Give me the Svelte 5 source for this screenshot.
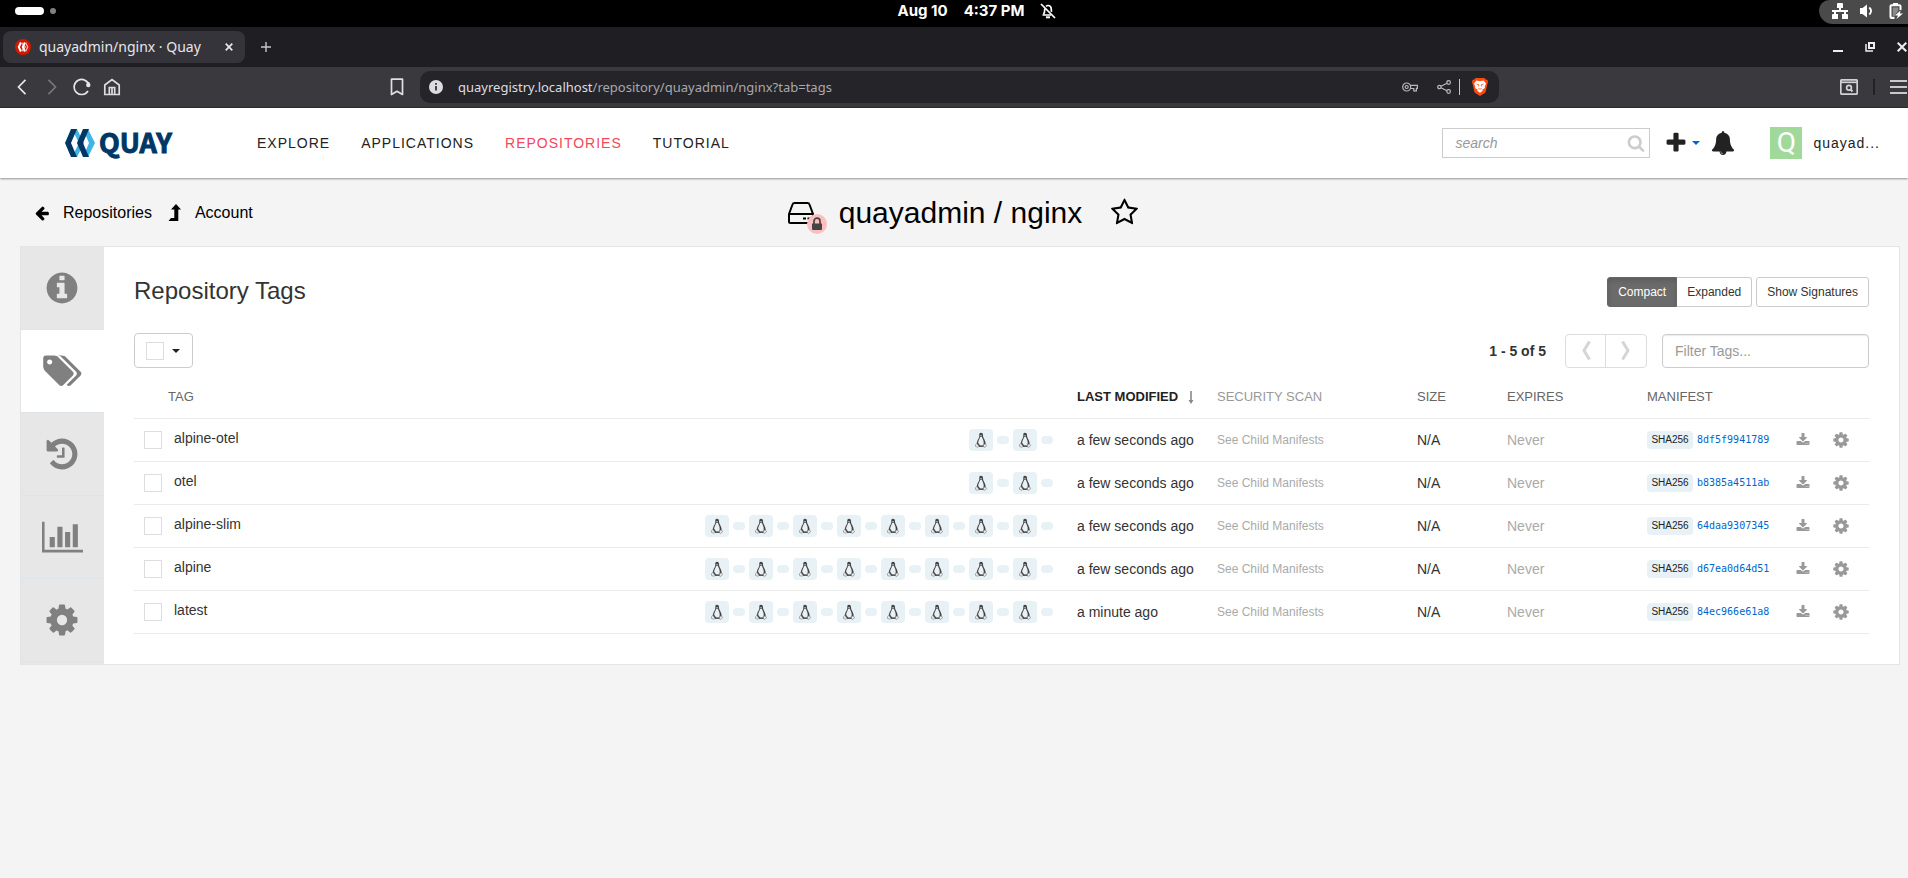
<script>
  const navLinks = ['EXPLORE', 'APPLICATIONS', 'REPOSITORIES', 'TUTORIAL'];
  const activeNav = 'REPOSITORIES';

  const tags = [
    { name: 'alpine-otel', archs: 2, modified: 'a few seconds ago', hash: '8df5f9941789' },
    { name: 'otel', archs: 2, modified: 'a few seconds ago', hash: 'b8385a4511ab' },
    { name: 'alpine-slim', archs: 8, modified: 'a few seconds ago', hash: '64daa9307345' },
    { name: 'alpine', archs: 8, modified: 'a few seconds ago', hash: 'd67ea0d64d51' },
    { name: 'latest', archs: 8, modified: 'a minute ago', hash: '84ec966e61a8' }
  ];

  const cog = 'M1152 896q0-106-75-181t-181-75-181 75-75 181 75 181 181 75 181-75 75-181zm512-109v222q0 12-8 23t-20 13l-185 28q-19 54-39 91 35 50 107 138 10 12 10 25t-9 23q-27 37-99 108t-94 71q-12 0-26-9l-138-108q-44 23-91 38-16 136-29 186-7 28-36 28h-222q-14 0-24.5-8.5t-11.5-21.5l-28-184q-49-16-90-37l-141 107q-10 9-25 9-14 0-25-11-126-114-165-168-7-10-7-23 0-12 8-23 15-21 51-66.5t54-70.5q-27-50-41-99l-183-27q-13-2-21-12.5t-8-23.5v-222q0-12 8-23t19-13l186-28q14-46 39-92-40-57-107-138-10-12-10-24 0-10 9-23 26-36 98.5-107.5t94.5-71.5q13 0 26 10l138 107q44-23 91-38 16-136 29-186 7-28 36-28h222q14 0 24.5 8.5t11.5 21.5l28 184q49 16 90 37l142-107q9-9 24-9 13 0 25 10 129 119 165 170 7 8 7 22 0 12-8 23-15 21-51 66.5t-54 70.5q26 50 41 98l183 28q13 2 21 12.5t8 23.5z';
  const info = 'M1152 1376v-160q0-14-9-23t-23-9h-96v-512q0-14-9-23t-23-9h-320q-14 0-23 9t-9 23v160q0 14 9 23t23 9h96v320h-96q-14 0-23 9t-9 23v160q0 14 9 23t23 9h448q14 0 23-9t9-23zm-128-896v-160q0-14-9-23t-23-9h-192q-14 0-23 9t-9 23v160q0 14 9 23t23 9h192q14 0 23-9t9-23zm640 416q0 209-103 385.5t-279.5 279.5-385.5 103-385.5-103-279.5-279.5-103-385.5 103-385.5 279.5-279.5 385.5-103 385.5 103 279.5 279.5 103 385.5z';
  const history = 'M1664 896q0 156-61 298t-164 245-245 164-298 61q-172 0-327-72.5t-264-204.5q-7-10-6.5-22.5t8.5-20.5l137-138q10-9 25-9 16 2 23 12 73 95 179 147t225 52q104 0 198.5-40.5t163.5-109.5 109.5-163.5 40.5-198.5-40.5-198.5-109.5-163.5-163.5-109.5-198.5-40.5q-98 0-188 35.5t-160 101.5l137 138q31 30 14 69-17 40-59 40h-448q-26 0-45-19t-19-45v-448q0-42 40-59 39-17 69 14l130 129q107-101 244.5-156.5t284.5-55.5q156 0 298 61t245 164 164 245 61 298zm-640-288v448q0 14-9 23t-23 9h-320q-14 0-23-9t-9-23v-64q0-14 9-23t23-9h224v-352q0-14 9-23t23-9h64q14 0 23 9t9 23z';
  const tagsIcon = 'M448 448q0-53-37.5-90.5t-90.5-37.5-90.5 37.5-37.5 90.5 37.5 90.5 90.5 37.5 90.5-37.5 37.5-90.5zm1067 576q0 53-37 90l-491 492q-39 37-91 37-53 0-90-37l-715-716q-38-37-64.5-101t-26.5-117v-416q0-52 38-90t90-38h416q53 0 117 26.5t102 64.5l715 714q37 39 37 91zm384 0q0 53-37 90l-491 492q-39 37-91 37-36 0-59-14t-53-45l470-470q37-37 37-90 0-52-37-91l-715-714q-38-38-102-64.5t-117-26.5h224q53 0 117 26.5t102 64.5l715 714q37 39 37 91z';
  const chart = 'M640 896v512h-256v-512h256zm384-512v1024h-256v-1024h256zm1024 1152v128h-2048v-1536h128v1408h1920zm-640-896v768h-256v-768h256zm384-384v1152h-256v-1152h256z';

  const sideTabs = [
    { label: 'Information', path: info, width: 36, box: '0 0 1792 1792' },
    { label: 'Tags', path: tagsIcon, width: 39, box: '0 0 1920 1792', active: true },
    { label: 'Tag History', path: history, width: 36, box: '0 0 1792 1792' },
    { label: 'Usage Logs', path: chart, width: 41, box: '0 0 2048 1792' },
    { label: 'Settings', path: cog, width: 36, box: '0 0 1792 1792' }
  ];
</script>

<div class="sysbar">
  <div class="workspaces"><span class="current"></span><span class="dot"></span></div>
  <div class="clock">
    <span>Aug 10</span><span>4:37 PM</span>
    <svg width="16" height="16" viewBox="0 0 16 16" fill="none" stroke="#fff" stroke-width="1.7">
      <path d="M3.5 11.2c1-1 1.2-2.300 1.2-4.200 0-.6.1-1 .3-1.500M6 3.300C6.600 2.800 7.300 2.500 8 2.500c2 0 3.300 1.600 3.300 4.200 0 .8.100 1.500.2 2.100M2.500 12h8.500" />
      <path d="M1 1l14 14" /><path d="M6 14.300h4" stroke-width="2" />
    </svg>
  </div>
  <div class="tray">
    <svg width="16" height="16" viewBox="0 0 16 16" fill="#fff"><path d="M6 0h4a1 1 0 0 1 1 1v4H9v2h7v2h-2v2h1a1 1 0 0 1 1 1v4h-6v-5h2V9H4v2h2v5H0v-4a1 1 0 0 1 1-1h1V9H0V7h7V5H5V1a1 1 0 0 1 1-1z" /></svg>
    <svg width="16" height="16" viewBox="0 0 16 16" fill="#fff"><path d="M0 5h2.500L7 1.500v13L2.500 11H0z" /><path d="M9.300 4.500q3.600 3.500 0 7" fill="none" stroke="#fff" stroke-width="1.800" /></svg>
    <svg width="16" height="16" viewBox="0 0 16 16"><path d="M5 0h5v1.200h1.500A2 2 0 0 1 13.500 3v4h-2V3.200h-8v10.600h3V16h-3a2 2 0 0 1-2-2V3.200a2 2 0 0 1 2-2H5z" fill="#fff" /><path d="M4.700 4.500h5.600V8l-4 5H4.700z" fill="#8a8a8a" /><path d="M12.500 7.500L7 12.500h3L8.500 16l6.500-5.500h-3z" fill="#fff" /></svg>
  </div>
</div>

<div class="tabstrip">
  <div class="btab">
    <svg width="16" height="16" viewBox="0 0 16 16"><circle cx="8" cy="8" r="8" fill="#d31800" /><path d="M6.700 3.800L10.300 8l-3.600 4.200M10.700 3.800L12.700 8l-2 4.200" fill="none" stroke="#f3b5ad" stroke-width="1.300" /><path d="M5.900 3.500L3.800 8l2.100 4.500M9.900 3.500L7.800 8l2.100 4.500" fill="none" stroke="#fff" stroke-width="2" /></svg>
    <span class="btitle">quayadmin/nginx · Quay</span>
    <button class="plain" aria-label="Close tab"><svg width="8" height="8" viewBox="0 0 8 8"><path d="M.7.7l6.600 6.600M7.300.7L.7 7.300" stroke="#e8e8ea" stroke-width="1.700" /></svg></button>
  </div>
  <button class="plain newtab" aria-label="New tab"><svg width="12" height="12" viewBox="0 0 12 12"><path d="M6 1v10M1 6h10" stroke="#c8c8cc" stroke-width="1.400" /></svg></button>
  <div class="wincontrols">
    <svg width="10" height="10" viewBox="0 0 10 10"><path d="M0 9h10" stroke="#eee" stroke-width="2" /></svg>
    <svg width="10" height="10" viewBox="0 0 10 10"><path d="M4 1h5v5H4z" fill="none" stroke="#eee" stroke-width="2" /><path d="M1 2v7h7" fill="none" stroke="#eee" stroke-width="1.500" /></svg>
    <svg width="10" height="10" viewBox="0 0 10 10"><path d="M.7.700l8.600 8.600M9.300.700L.7 9.300" stroke="#eee" stroke-width="2" /></svg>
  </div>
</div>

<div class="toolbar">
  <div class="navbtns">
    <svg width="18" height="18" viewBox="0 0 18 18"><path d="M12.500 1.800L5.500 9l7 7.200" stroke="#e6e6e9" /></svg>
    <svg width="18" height="18" viewBox="0 0 18 18"><path d="M5.500 1.800L12.500 9l-7 7.200" stroke="#77767c" /></svg>
    <svg width="18" height="18" viewBox="0 0 18 18"><path d="M16 7.500A7.500 7.500 0 1 0 15 13" stroke="#e6e6e9" /><circle cx="15.300" cy="7" r="2.200" fill="#e6e6e9" /><path d="M15.500 4v4" stroke="#e6e6e9" /></svg>
    <svg width="18" height="18" viewBox="0 0 18 18"><path d="M1.800 7L9 1.500 16.200 7v9.500H1.800zM6.300 16V9.500h5.400V16M9 9.500V16" stroke="#dcdce0" /></svg>
  </div>
  <svg class="bookmark" width="14" height="18" viewBox="0 0 14 18"><path d="M1.500 1.200h11v15.300L7 13.300l-5.500 3.200z" stroke="#e0e0e4" stroke-linejoin="round" /></svg>
  <div class="address">
    <svg width="14" height="14" viewBox="0 0 14 14"><circle cx="7" cy="7" r="7" fill="#dcdce2" /><path d="M7 6v4.500M7 3v1.700" stroke="#35343a" stroke-width="1.800" /></svg>
    <span class="url">quayregistry.localhost<span>/repository/quayadmin/nginx?tab=tags</span></span>
    <svg width="16" height="16" viewBox="0 0 16 16" stroke="#b9b8bf" fill="none" stroke-width="1.200"><circle cx="4.700" cy="8" r="4" /><circle cx="4.700" cy="8" r="1.500" /><path d="M8.500 6.300h6.900v3h-1v2.500h-2.600V9.500H8.500" /></svg>
    <svg class="share" width="14" height="14" viewBox="0 0 14 14" stroke="#b9b8bf" fill="none" stroke-width="1.200"><circle cx="2.400" cy="7" r="1.700" /><circle cx="11.600" cy="2.500" r="1.800" /><circle cx="11.600" cy="11.500" r="1.800" /><path d="M4 6.300l6-3M4 7.700l6 3" /></svg>
    <i class="bar"></i>
    <svg width="16" height="18" viewBox="0 0 16 18"><path d="M3.500 0h9L14 1.800l1.500-.1.500 2.800-.6 1.500-1.600 7.200q-.4 1.300-1.500 2L8 18l-4.300-2.800q-1.100-.7-1.500-2L.6 6 0 4.500l.5-2.800L2 1.800z" fill="#fb4a10" /><path d="M4.500 2.600L8 3.300l3.500-.7L14 5.600l-1.300 3.200.2 1.200-2.700 1.800.5 1L8 14.800l-2.700-2 .5-1L3.100 10l.2-1.200L2 5.600z" fill="#fff" /><path d="M4.500 6l2.500.9-.5 1.500M11.500 6L9 6.900l.5 1.500M6.300 10.500L8 11.300l1.700-.8" fill="none" stroke="#fb4a10" stroke-width=".8" /></svg>
  </div>
  <div class="menus">
    <svg width="18" height="16" viewBox="0 0 18 16"><rect x=".8" y=".8" width="16.400" height="14.400" rx="1" stroke="#d2d2d6" /><path d="M1 3.300h16" stroke="#d2d2d6" /><circle cx="9" cy="8.800" r="2.400" stroke="#d2d2d6" /><path d="M10.500 10.500l2 2" stroke="#d2d2d6" stroke-width="2" /></svg>
    <i class="darkbar"></i>
    <svg width="18" height="16" viewBox="0 0 18 16"><path d="M0 2h17M0 8h17M0 14h17" stroke="#c9c9cd" stroke-width="2" /></svg>
  </div>
</div>

<header>
  <a class="logo" href="#home" aria-label="Quay">
    <svg width="30" height="28" viewBox="0 0 30 28"><path d="M7 0h5l7 14-7 14H7l7-14z" fill="#40b4e5" /><path d="M18 0h5l7 14-7 14h-5l6-14z" fill="#40b4e5" /><path d="M6 0h6L6 14l6 14H6L0 14z" fill="#003764" /><path d="M18 0h6l-6 14 6 14h-6l-6-14z" fill="#003764" /></svg>
    <span>QUAY</span>
  </a>
  <nav>
    {#each navLinks as link}
      <a href="#{link.toLowerCase()}" class:active={link === activeNav}>{link}</a>
    {/each}
  </nav>
  <div class="tools">
    <label class="search">
      <input type="text" placeholder="search" aria-label="search" />
      <svg width="18" height="18" viewBox="0 0 1792 1792" fill="#ccc"><path d="M1216 832q0-185-131.500-316.500t-316.500-131.500-316.500 131.500-131.500 316.500 131.500 316.500 316.500 131.500 316.500-131.500 131.500-316.500zm512 832q0 52-38 90t-90 38q-54 0-90-38l-343-342q-179 124-399 124-143 0-273.500-55.500t-225-150-150-225-55.500-273.500 55.500-273.500 150-225 225-150 273.500-55.500 273.500 55.500 225 150 150 225 55.500 273.500q0 220-124 399l343 343q37 37 37 90z" /></svg>
    </label>
    <button class="plain create" aria-label="Create">
      <svg width="24" height="24" viewBox="0 0 1792 1792" fill="#222"><path d="M1600 736v192q0 40-28 68t-68 28h-416v416q0 40-28 68t-68 28h-192q-40 0-68-28t-28-68v-416h-416q-40 0-68-28t-28-68v-192q0-40 28-68t68-28h416v-416q0-40 28-68t68-28h192q40 0 68 28t28 68v416h416q40 0 68 28t28 68z" /></svg>
      <i class="caret blue"></i>
    </button>
    <button class="plain" aria-label="Notifications">
      <svg width="24" height="24" viewBox="0 0 1792 1792" fill="#222"><path d="M912 1696q0-16-16-16-59 0-101.500-42.500t-42.500-101.500q0-16-16-16t-16 16q0 73 51.500 124.500t124.500 51.500q16 0 16-16zm816-288q0 52-38 90t-90 38h-448q0 106-75 181t-181 75-181-75-75-181h-448q-52 0-90-38t-38-90q50-42 91-88t85-119.500 74.500-158.500 50-206 19.500-260q0-152 117-282.500t307-158.500q-8-19-8-39 0-40 28-68t68-28 68 28 28 68q0 20-8 39 190 28 307 158.500t117 282.500q0 139 19.500 260t50 206 74.500 158.500 85 119.500 91 88z" /></svg>
    </button>
    <a class="user" href="#user"><span class="avatar">Q</span><span>quayad...</span></a>
  </div>
</header>

<main>
  <div class="titlebar">
    <div class="crumbs">
      <a href="#repositories"><svg width="16" height="16" viewBox="0 0 1792 1792"><path d="M1664 896v128q0 53-32.500 90.500t-84.500 37.500h-704l293 294q38 36 38 90t-38 90l-75 76q-37 37-90 37-52 0-91-37l-651-652q-37-37-37-90 0-52 37-91l651-650q38-38 91-38 52 0 90 38l75 74q38 38 38 91t-38 91l-293 293h704q52 0 84.500 37.500t32.500 90.500z" /></svg>Repositories</a>
      <a href="#account"><svg width="14" height="17" viewBox="0 0 14 17"><path d="M8 0l5 5.500h-2.700V17H.5L3 14h3.300V5.500H3z" /></svg>Account</a>
    </div>
    <div class="title">
      <span class="repo">
        <svg width="26" height="22" viewBox="0 0 26 22" fill="none" stroke="#000" stroke-width="2"><path d="M1 12L4.500 2.500Q5 1 6.500 1h13q1.500 0 2 1.500L25 12v7.500q0 1.500-1.500 1.500h-21Q1 21 1 19.500zM1 12h24" /><path d="M15 16.500h3M19.500 16.500h3" /></svg>
        <span class="lock"><svg width="12" height="14" viewBox="0 0 12 14"><path d="M1.500 6.500h9q.5 0 .5.500v5q0 1-1 1H2q-1 0-1-1V7q0-.5.5-.5z" fill="#444" /><path d="M3 7V4.200a3 3 0 0 1 6 0V7" fill="none" stroke="#444" stroke-width="1.700" /></svg></span>
      </span>
      <h1>quayadmin / nginx</h1>
      <button class="plain" aria-label="Star repository"><svg width="29" height="29" viewBox="0 0 1792 1792"><path d="M1201 1004l306-297-422-62-189-382-189 382-422 62 306 297-73 421 378-199 377 199zm527-357q0 22-26 48l-363 354 86 500q1 7 1 20 0 50-41 50-19 0-40-12l-449-236-449 236q-22 12-40 12-21 0-31.500-14.500t-10.500-35.500q0-6 2-20l86-500-364-354q-25-27-25-48 0-37 56-46l502-73 225-455q19-41 49-41t49 41l225 455 502 73q56 9 56 46z" /></svg></button>
    </div>
  </div>

  <div class="panel">
    <aside>
      {#each sideTabs as tab}
        <button class:active={tab.active} aria-label={tab.label}>
          <svg width={tab.width} height="36" viewBox={tab.box} fill="#808080"><path d={tab.path} /></svg>
        </button>
      {/each}
    </aside>
    <section>
      <div class="head">
        <h2>Repository Tags</h2>
        <div class="group"><button class="btn on">Compact</button><button class="btn">Expanded</button></div>
        <button class="btn">Show Signatures</button>
      </div>
      <div class="controls">
        <div class="selectall"><input type="checkbox" aria-label="Select all" /><i class="caret"></i></div>
        <b>1 - 5 of 5</b>
        <div class="pager">
          <button aria-label="Previous page"><svg width="10" height="19" viewBox="0 0 10 19"><path d="M8.500.5L3 9.500l5.500 9" /></svg></button>
          <button aria-label="Next page"><svg width="10" height="19" viewBox="0 0 10 19"><path d="M1.500.5L7 9.500l-5.500 9" /></svg></button>
        </div>
        <input class="filter" type="text" placeholder="Filter Tags..." aria-label="Filter Tags" />
      </div>
      <table>
        <thead>
          <tr>
            <th class="c-check"></th>
            <th>TAG</th>
            <th class="c-arch"></th>
            <th class="c-mod"><span>LAST MODIFIED</span><svg width="6" height="13" viewBox="0 0 6 13"><path d="M3 0v11" stroke="#888" stroke-width="1.600" /><path d="M.5 9h5L3 13z" fill="#888" /></svg></th>
            <th class="c-scan">SECURITY SCAN</th>
            <th class="c-size">SIZE</th>
            <th class="c-exp">EXPIRES</th>
            <th class="c-man">MANIFEST</th>
            <th class="c-dl"></th>
            <th class="c-gear"></th>
          </tr>
        </thead>
        <tbody>
          {#each tags as tag}
            <tr>
              <td class="check"><input type="checkbox" aria-label={'Select ' + tag.name} /></td>
              <td class="name">{tag.name}</td>
              <td>
                <div class="archs">
                  {#each Array(tag.archs) as _}
                    <span class="os"><svg width="12" height="16" viewBox="0 0 12 16"><path d="M5.900.8C4.700.8 4.300 1.600 4.300 2.900c0 1.400.1 2.100-.7 3.500C2.800 7.800 1.900 9.500 1.700 11.600L3.300 14.500h5.400l1.900-2.500c.2-2-.8-4-1.700-5.600-.7-1.300-.9-2-.9-3.500C8 1.500 7.200.8 5.900.8z" fill="#444" /><path d="M5.300 4.800c-.5 1.600-1.900 3.700-2.200 5.900l2 2.800h3c.9-1.500.8-4 0-5.800C7.500 6.500 7.100 5.600 6.900 4.800z" fill="#e8f1f6" /><path d="M4.900 3h2.200l-.9 1.400z" fill="#b8b8b8" /><path d="M1.900 11.400l2.100 3q-.5 1.100-1.700.7L.5 14.400v-1.600zM8.400 12.200l2.500.1.800 1.300-2 1.700q-1.200.2-1.300-.9z" fill="#ececec" stroke="#777" stroke-width=".6" /><path d="M4 14.300h4.300" stroke="#444" stroke-width="1" /></svg></span><i class="dash"></i>
                  {/each}
                </div>
              </td>
              <td>{tag.modified}</td>
              <td class="scan">See Child Manifests</td>
              <td>N/A</td>
              <td class="never">Never</td>
              <td><div class="manifest"><span class="sha">SHA256</span><a href="#{tag.hash}">{tag.hash}</a></div></td>
              <td class="act"><button class="plain" aria-label="Download"><svg width="14" height="14" viewBox="0 0 1792 1792" fill="#999"><path d="M1344 1344q0-26-19-45t-45-19-45 19-19 45 19 45 45 19 45-19 19-45zm256 0q0-26-19-45t-45-19-45 19-19 45 19 45 45 19 45-19 19-45zm128-224v320q0 40-28 68t-68 28h-1472q-40 0-68-28t-28-68v-320q0-40 28-68t68-28h465l135 136q58 56 136 56t136-56l136-136h464q40 0 68 28t28 68zm-325-569q17 41-14 70l-448 448q-18 19-45 19t-45-19l-448-448q-31-29-14-70 17-39 59-39h256v-448q0-26 19-45t45-19h256q26 0 45 19t19 45v448h256q42 0 59 39z" /></svg></button></td>
              <td class="act"><button class="plain" aria-label="Tag options"><svg width="18" height="18" viewBox="0 0 1792 1792" fill="#999"><path d={cog} /></svg></button></td>
            </tr>
          {/each}
        </tbody>
      </table>
    </section>
  </div>
</main>

<style>
  :global(body) { background: #f4f4f4; font-family: "Liberation Sans", Arial, sans-serif; font-size: 14px; color: #333; overflow-x: hidden; }
  * { box-sizing: border-box; }
  svg { display: block; flex: none; }
  a { color: inherit; text-decoration: none; }
  button, input { font-family: inherit; }
  .plain { background: none; border: 0; padding: 0; display: block; }

  .sysbar { display: grid; grid-template-columns: 1fr auto 1fr; align-items: start; height: 27px; background: #000; color: #fff; font: bold 15px/22px Inter, sans-serif; }
  .workspaces { display: flex; align-items: center; gap: 6px; padding-left: 15px; height: 22px; }
  .current { width: 29px; height: 8px; border-radius: 4px; background: #fff; }
  .dot { width: 6px; height: 6px; border-radius: 50%; background: #808080; }
  .clock { display: flex; align-items: center; gap: 16px; margin-left: 46px; }
  .tray { justify-self: end; display: flex; align-items: center; gap: 12px; height: 24px; padding: 0 4px 2px 13px; background: #4a4a4a; border-radius: 12px 0 0 16px; }

  .tabstrip { display: flex; align-items: center; height: 40px; padding: 0 0 0 3px; background: #1f1e23; }
  .btab { display: flex; align-items: center; width: 242px; height: 32px; padding: 0 12px; border-radius: 8px; background: #35343a; }
  .btitle { flex: 1; padding-left: 8px; font: 14px/20px "Noto Sans", sans-serif; color: #e6e6ea; white-space: nowrap; }
  .newtab { margin-left: 15px; }
  .wincontrols { display: flex; gap: 22px; margin-left: auto; padding-right: 1px; }

  .toolbar { display: flex; align-items: center; height: 41px; padding-bottom: 1px; background: #3a393e; border-bottom: 1px solid #2b2a2f; fill: none; stroke-width: 1.7; }
  .navbtns { display: flex; gap: 12px; padding-left: 13px; }
  .bookmark { margin: 0 16px 0 269px; }
  .address { display: flex; align-items: center; flex: 1; max-width: 1079px; height: 32px; padding: 0 11px 0 9px; border-radius: 10px; background: #252429; }
  .url { flex: 1; padding-left: 15px; font: 13px/20px "Noto Sans", sans-serif; color: #dddde2; white-space: nowrap; }
  .url span { color: #a9a8af; }
  .share { margin: 0 8px 0 19px; }
  .bar { width: 1px; height: 16px; margin-right: 12px; background: #c5c5ca; }
  .menus { display: flex; align-items: center; gap: 15px; margin-left: auto; }
  .darkbar { width: 2px; height: 16px; background: #222126; }

  header { display: flex; align-items: center; height: 70px; padding: 0 28px 0 65px; background: #fff; box-shadow: 0 1px 2px rgba(0, 0, 0, 0.4); position: relative; }
  .logo { display: flex; align-items: center; gap: 4px; width: 192px; font: bold 27px/28px "Noto Sans CJK SC", sans-serif; color: #003764; -webkit-text-stroke: 1px #003764; }
  .logo span { padding-bottom: 2px; }
  nav { display: flex; gap: 31px; letter-spacing: 1px; color: #222; }
  nav .active { color: #f4475a; }
  .tools { display: flex; align-items: center; margin-left: auto; }
  .search { display: flex; align-items: center; width: 208px; height: 30px; padding: 0 4px 0 12px; border: 1px solid #ccc; }
  .search input { flex: 1; min-width: 0; border: 0; outline: 0; padding: 0; font-size: 14px; font-style: italic; background: none; }
  input::placeholder { color: #999; opacity: 1; }
  .create { display: flex; align-items: center; gap: 4px; margin: 0 11px 0 14px; }
  .caret { display: inline-block; border: 4px solid transparent; border-top-color: #222; border-bottom: 0; }
  .caret.blue { border-top-color: #0066cc; }
  .user { display: flex; align-items: center; gap: 11px; margin-left: 35px; letter-spacing: 1px; color: #222; }
  .avatar { width: 32px; height: 32px; background: #a1d99b; color: #fff; font: 28px/32px Roboto, sans-serif; letter-spacing: 0; text-align: center; }

  main { padding: 0 8px 0 20px; color: #000; }
  .titlebar { display: grid; grid-template-columns: 1fr auto 1fr; align-items: center; height: 68px; padding-top: 1px; }
  .crumbs { display: flex; gap: 16px; padding-left: 14px; font-size: 16px; }
  .crumbs a { display: flex; align-items: center; gap: 13px; line-height: 18px; }
  .title { display: flex; align-items: center; padding-left: 7px; }
  .repo { position: relative; margin-right: 25px; }
  .lock { position: absolute; left: 19px; top: 12px; width: 20px; height: 20px; border-radius: 50%; background: #fbbfbf; display: grid; place-items: center; }
  h1 { margin: 0; font-size: 30px; line-height: 34px; font-weight: normal; }
  .title button { margin-left: 28px; }

  .panel { display: flex; background: #fff; border: 1px solid #e4e4e4; color: #333; }
  aside { width: 83px; flex: none; background: #e7e7e7; }
  aside button { display: flex; align-items: center; justify-content: center; width: 100%; height: 83px; padding: 0 1px 0 0; border: 0; border-bottom: 1px solid #dde4ea; background: #e7e7e7; }
  aside .active { background: #fff; }
  section { flex: 1; padding: 30px; }
  .head { display: flex; align-items: center; height: 30px; }
  h2 { flex: 1; margin: 0; font-size: 24px; line-height: 26px; font-weight: normal; padding-bottom: 3px; }
  .group { display: flex; margin-right: 4px; }
  .btn { height: 30px; padding: 0 10px; border: 1px solid #ccc; border-radius: 3px; background: #fff; font-size: 12px; color: #333; }
  .group .btn { border-radius: 0 3px 3px 0; }
  .group .on { border-color: #666; border-radius: 3px 0 0 3px; background: #6b6b6b; color: #fff; box-shadow: inset 0 3px 5px rgba(0, 0, 0, 0.13); }
  .group .btn + .btn { border-left: 0; }
  .controls { display: flex; align-items: center; height: 35px; margin-top: 26px; }
  .selectall { display: flex; align-items: center; gap: 8px; width: 59px; height: 35px; padding-left: 11px; border: 1px solid #ccc; border-radius: 4px; margin-right: auto; }
  input[type="checkbox"] { appearance: none; display: block; flex: none; width: 18px; height: 18px; margin: 0; border: 1px solid #ddd; background: #fff; }
  .pager { display: flex; margin: 0 15px 0 19px; border: 1px solid #ddd; border-radius: 4px; }
  .pager button { display: flex; align-items: center; justify-content: center; width: 40px; height: 32px; padding: 0; border: 0; background: none; fill: none; stroke: #d5d5d5; stroke-width: 3; }
  .pager button:first-child { border-right: 1px solid #ddd; }
  .filter { width: 207px; height: 34px; padding: 0 12px; border: 1px solid #ccc; border-radius: 4px; font-size: 14px; box-shadow: inset 0 1px 1px rgba(0, 0, 0, 0.08); }

  table { width: 100%; table-layout: fixed; border-collapse: collapse; margin-top: 7px; }
  tr { height: 43px; border-bottom: 1px solid #eaeaea; }
  th { padding: 0; font-size: 13px; font-weight: normal; text-align: left; color: #666; }
  td { padding: 0; }
  .c-check { width: 34px; }
  .c-arch { width: 400px; }
  .c-mod { width: 140px; }
  .c-mod span { display: inline-block; font-weight: bold; color: #222; margin-right: 10px; }
  .c-mod svg { display: inline-block; vertical-align: middle; }
  .c-scan { width: 200px; color: #999; }
  .c-size { width: 90px; }
  .c-exp, .c-man { width: 140px; }
  .c-dl { width: 36px; }
  .c-gear { width: 46px; }
  .check { padding: 0 0 0 10px; }
  .name { padding: 0 0 3px 6px; }
  .archs { display: flex; align-items: center; justify-content: flex-end; gap: 4px; padding-right: 24px; }
  .os { display: grid; place-items: center; width: 24px; height: 22px; border-radius: 4px; background: #e8f1f6; }
  .dash { width: 12px; height: 8px; border-radius: 4px; background: #e8f1f6; }
  .scan { font-size: 12px; color: #aaa; padding-top: 1px; }
  .never { color: #aaa; }
  .manifest { display: flex; align-items: center; gap: 4px; }
  .sha { width: 46px; padding: 3px 0; border-radius: 4px; background: #e8f1f6; color: #222; font-size: 10px; line-height: 12px; text-align: center; }
  .manifest a { font: 10px/12px "DejaVu Sans Mono", monospace; color: #0066cc; }
  .act { padding-left: 9px; }
</style>
